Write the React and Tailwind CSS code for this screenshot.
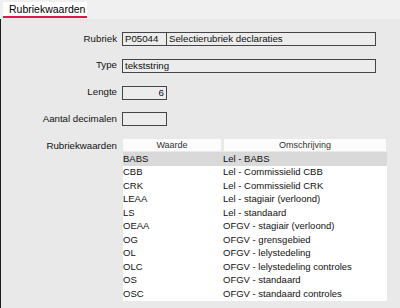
const ROWS = [
  ['BABS', 'Lel - BABS'],
  ['CBB', 'Lel - Commissielid CBB'],
  ['CRK', 'Lel - Commissielid CRK'],
  ['LEAA', 'Lel - stagiair (verloond)'],
  ['LS', 'Lel - standaard'],
  ['OEAA', 'OFGV - stagiair (verloond)'],
  ['OG', 'OFGV - grensgebied'],
  ['OL', 'OFGV - lelystedeling'],
  ['OLC', 'OFGV - lelystedeling controles'],
  ['OS', 'OFGV - standaard'],
  ['OSC', 'OFGV - standaard controles'],
];

function Field({ className = '', children, right }) {
  return (
    <div className={`h-[14px] border border-[#454545] bg-[#ececec] px-[2px] text-[9.7px] leading-[12px] text-[#111] whitespace-nowrap overflow-hidden ${right ? 'text-right' : ''} ${className}`}>
      {children}
    </div>
  );
}

function Row({ label, children }) {
  return (
    <div className="flex items-center h-[14px]">
      <div className="w-[116px] text-right text-[9.7px] text-[#111] pr-0">{label}</div>
      <div className="ml-[5px] flex">{children}</div>
    </div>
  );
}

export default function App() {
  return (
    <div className="w-[400px] h-[308px] bg-[#f0f0f0] font-['Liberation_Sans',Arial,sans-serif] overflow-hidden flex flex-col">
      {/* Tab strip */}
      <div className="h-[19px] pt-[2px] pl-[3px] flex">
        <div className="w-[84px] h-[16px] bg-white border-b-2 border-[#d8194c] text-[10.5px] leading-[14px] pl-[6px] text-black">
          Rubriekwaarden
        </div>
      </div>

      {/* Panel */}
      <div className="flex-1 bg-[#e9e9e9] border-l border-[#1c1c1c] pt-[13px] flex flex-col gap-[12.75px]">
        <Row label="Rubriek">
          <Field className="w-[45px]">P05044</Field>
          <Field className="w-[210px] -ml-px">Selectierubriek declaraties</Field>
        </Row>
        <Row label="Type">
          <Field className="w-[254px]">tekststring</Field>
        </Row>
        <Row label="Lengte">
          <Field className="w-[45px]" right>6</Field>
        </Row>
        <Row label="Aantal decimalen">
          <Field className="w-[45px]" />
        </Row>

        <div className="flex items-start">
          <div className="w-[116px] text-right text-[9.7px] text-[#111] leading-[13px]">Rubriekwaarden</div>
          <div className="ml-[6px] w-[264px]">
            <div className="flex gap-[3px] h-[12px] mb-[1px]">
              <div className="w-[98px] bg-[#fcfcfc] text-center text-[9px] leading-[12px] text-[#333]">Waarde</div>
              <div className="w-[162px] bg-[#fcfcfc] text-center text-[9px] leading-[12px] text-[#333]">Omschrijving</div>
            </div>
            <div className="bg-white">
              {ROWS.map(([code, desc], i) => (
                <div
                  key={code}
                  className={`flex h-[13.5px] items-center text-[9.5px] text-[#111] ${i === 0 ? 'bg-[#d9d9d9]' : ''}`}
                >
                  <div className="w-[100px]">{code}</div>
                  <div className="flex-1 whitespace-nowrap">{desc}</div>
                </div>
              ))}
            </div>
          </div>
        </div>
      </div>
    </div>
  );
}
